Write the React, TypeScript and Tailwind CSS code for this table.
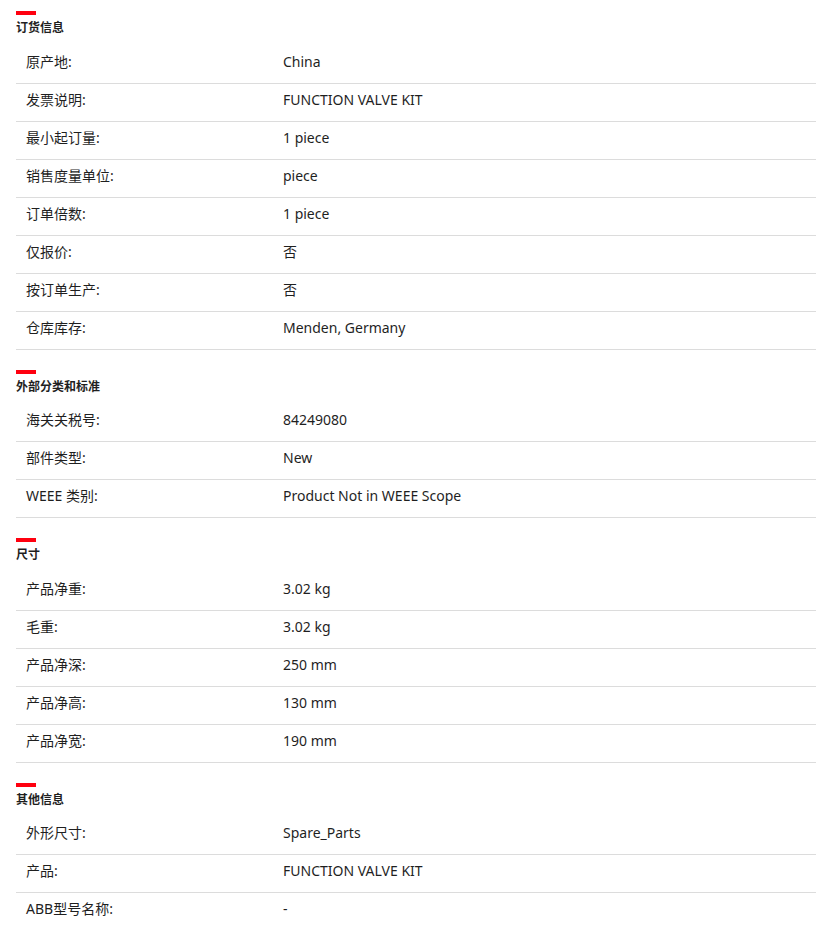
const sections = [
  {
    title: "订货信息",
    rows: [
      ["原产地:", "China"],
      ["发票说明:", "FUNCTION VALVE KIT"],
      ["最小起订量:", "1 piece"],
      ["销售度量单位:", "piece"],
      ["订单倍数:", "1 piece"],
      ["仅报价:", "否"],
      ["按订单生产:", "否"],
      ["仓库库存:", "Menden, Germany"],
    ],
  },
  {
    title: "外部分类和标准",
    rows: [
      ["海关关税号:", "84249080"],
      ["部件类型:", "New"],
      ["WEEE 类别:", "Product Not in WEEE Scope"],
    ],
  },
  {
    title: "尺寸",
    rows: [
      ["产品净重:", "3.02 kg"],
      ["毛重:", "3.02 kg"],
      ["产品净深:", "250 mm"],
      ["产品净高:", "130 mm"],
      ["产品净宽:", "190 mm"],
    ],
  },
  {
    title: "其他信息",
    rows: [
      ["外形尺寸:", "Spare_Parts"],
      ["产品:", "FUNCTION VALVE KIT"],
      ["ABB型号名称:", "-"],
    ],
  },
];

export default function App() {
  return (
    <div
      className="h-[929px] overflow-hidden bg-white pl-4 pr-[6px] pt-[11px] text-[#1f1f1f]"
      style={{ fontFamily: '"Noto Sans", "Noto Sans CJK SC", sans-serif' }}
    >
      {sections.map((s) => (
        <section key={s.title} className="mb-5">
          <div className="h-1 w-5 bg-[#ff000f]" />
          <h3 className="mt-[5px] text-[12px] font-bold leading-[16.5px]">{s.title}</h3>
          <div className="mt-[9px]">
            {s.rows.map(([label, value]) => (
              <div
                key={label}
                className="grid grid-cols-[267px_1fr] border-b border-[#dcdcdc] pb-[11px] pt-[6px] text-[14px] leading-5"
              >
                <span className="pl-[10px]">{label}</span>
                <span>{value}</span>
              </div>
            ))}
          </div>
        </section>
      ))}
    </div>
  );
}
